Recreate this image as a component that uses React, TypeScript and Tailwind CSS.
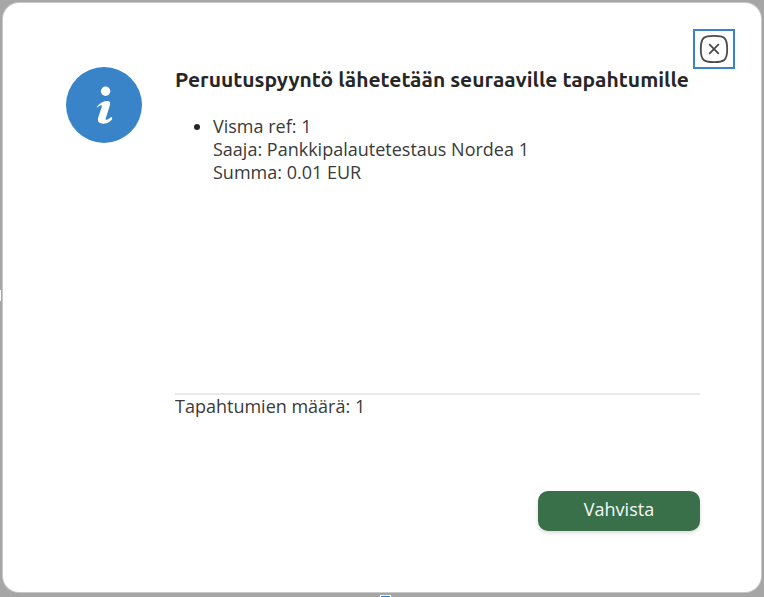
const transaction = {
  reference: "1",
  receiver: "Pankkipalautetestaus Nordea 1",
  amount: "0.01 EUR",
};

function InfoIcon() {
  return (
    <svg viewBox="0 0 76 76" className="size-[76px] shrink-0" role="img" aria-label="Info">
      <circle cx="38" cy="38" r="38" fill="#3983c8" />
      <circle cx="39.6" cy="24.2" r="4.7" fill="#fff" />
      <path
        d="M30.8 40.2C32.8 36.6 37.2 34 41.3 34C44.1 34 44.6 35.7 43.8 38.5L39.8 51.2C39.2 53.2 40.8 53.4 43.3 51.6L45.2 50C47.3 50.8 45.9 53.3 43.2 55C40.3 56.8 36.9 57.2 34.2 56.1C31.8 55.2 31.4 53.2 32.3 50.3L35.7 39.9C36.2 38.3 35.2 37.8 33.2 39L30.8 40.7Z"
        fill="#fff"
      />
    </svg>
  );
}

function CloseIcon() {
  return (
    <svg viewBox="0 0 30 30" className="size-[30px]" fill="none" stroke="#4a4a4a" aria-hidden="true">
      <path
        d="M15 1.8C24.8 1.8 28.2 3.2 28.2 15S24.8 28.2 15 28.2S1.8 26.8 1.8 15S5.2 1.8 15 1.8Z"
        strokeWidth="1.8"
      />
      <path d="M10.2 10.2L19.8 19.8M19.8 10.2L10.2 19.8" strokeWidth="1.8" />
    </svg>
  );
}

export default function App() {
  return (
    <div className="relative flex min-h-screen flex-col bg-[#a6a6a6] px-[3px] pt-[3px] pb-[5px] font-['Open_Sans','Noto_Sans',sans-serif] text-lg leading-[23px] text-[#3a3a3a]">
      <section
        role="dialog"
        aria-labelledby="dialog-title"
        className="relative flex flex-1 flex-col rounded-2xl bg-white pt-16 pr-[61px] pb-[61px] pl-[63px] shadow-[0_0_0_1px_#c8c8c8]"
      >
        <button
          type="button"
          aria-label="Sulje"
          className="absolute top-[26px] right-[26px] flex h-10 w-[42px] items-center justify-center border-2 border-[#3983c8] bg-white"
        >
          <CloseIcon />
        </button>
        <div className="flex gap-[33px]">
          <InfoIcon />
          <div className="min-w-0 flex-1">
            <h1
              id="dialog-title"
              className="font-['Ubuntu','Noto_Sans',sans-serif] text-[21px] leading-6 font-bold text-[#262626]"
            >
              Peruutuspyyntö lähetetään seuraaville tapahtumille
            </h1>
            <ul className="mt-6 min-h-[278px] list-disc pl-[38px] marker:text-[#262626]">
              <li>
                <p>Visma ref: {transaction.reference}</p>
                <p>Saaja: {transaction.receiver}</p>
                <p>Summa: {transaction.amount}</p>
              </li>
            </ul>
            <p className="border-t-2 border-[#eaeaea]">Tapahtumien määrä: 1</p>
          </div>
        </div>
        <div className="mt-auto flex justify-end">
          <button
            type="button"
            className="h-10 w-[162px] rounded-[10px] bg-[#39704a] pb-1 text-[#f5f8f6] shadow-[0_2px_4px_rgba(0,0,0,0.15)]"
          >
            Vahvista
          </button>
        </div>
      </section>
      <span className="absolute top-[290px] left-0 h-[11px] w-px bg-white" />
      <span className="absolute bottom-0 left-[380px] h-0.5 w-[11px] border-x border-t border-white bg-[#1a7ff0]" />
    </div>
  );
}
